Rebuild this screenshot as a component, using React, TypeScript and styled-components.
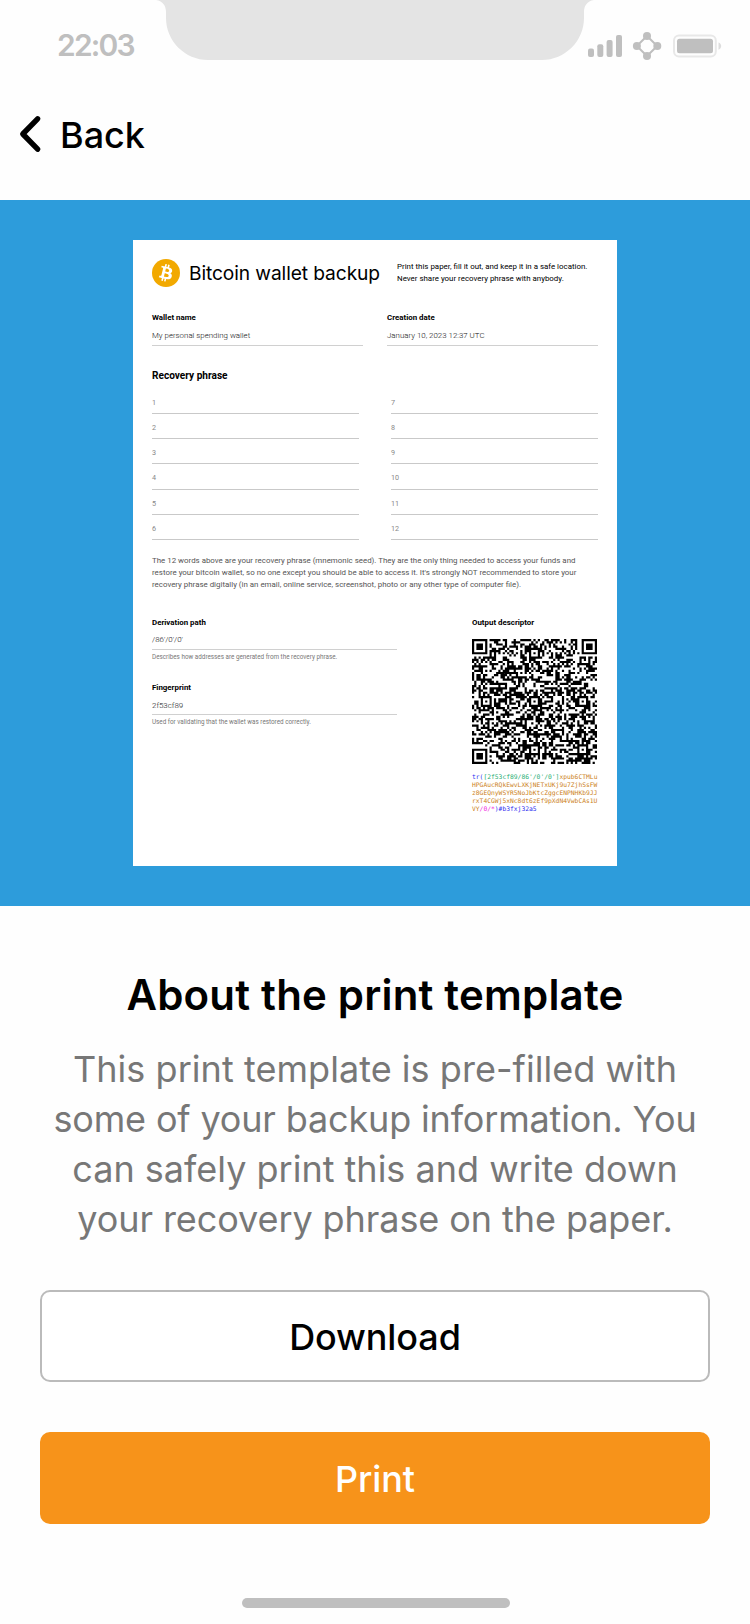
import React from 'react';
import styled, { createGlobalStyle } from 'styled-components';

const Global = createGlobalStyle`
  *, *::before, *::after { box-sizing: border-box; }
  body { margin: 0; background: #fefefe; }
  h1, h2, h3, p { margin: 0; }
`;

const Screen = styled.div`
  width: 750px;
  height: 1624px;
  display: flex;
  flex-direction: column;
  overflow: hidden;
  background: #fefefe;
  color: #000;
  font-family: Inter, "Liberation Sans", sans-serif;
`;

const StatusBar = styled.header`
  height: 88px;
  flex: none;
  display: flex;
  align-items: flex-start;
  padding-left: 57px;
`;

const Clock = styled.time`
  flex: none;
  width: 99px;
  padding-top: 26px;
  font-size: 30px;
  line-height: 38px;
  font-weight: 600;
  letter-spacing: -1.8px;
  color: #bfbfbf;
`;

const NotchShape = styled.svg`
  display: block;
  flex: none;
  margin-right: -6px;
`;

const StatusIcons = styled.svg`
  display: block;
  flex: none;
  margin-top: 28px;
`;

const NavBar = styled.nav`
  height: 112px;
  flex: none;
  display: flex;
  align-items: flex-start;
  padding: 24px 0 0 18px;
`;

const BackButton = styled.button`
  display: flex;
  align-items: flex-start;
  gap: 16px;
  height: 46px;
  padding: 0;
  border: 0;
  background: none;
  color: #000;
  font: 500 36px/46px Inter, sans-serif;
`;

const Chevron = styled.svg`
  display: block;
  margin-top: 2px;
`;

const Preview = styled.section`
  flex: none;
  height: 706px;
  padding-top: 40px;
  display: flex;
  justify-content: center;
  align-items: flex-start;
  background: #2d9cdb;
`;

const Paper = styled.article`
  width: 484px;
  height: 626px;
  padding: 19px 19px 0;
  background: #fff;
  font-family: Roboto, sans-serif;
  color: #000;
`;

const PaperHeader = styled.div`
  display: flex;
  height: 53px;
`;

const PaperTitle = styled.h1`
  margin-left: 9px;
  width: 208px;
  white-space: nowrap;
  font: 400 19.2px/28px Inter, sans-serif;
  letter-spacing: -0.1px;
`;

const PaperHint = styled.p`
  font-size: 7.92px;
  line-height: 12px;
  white-space: nowrap;
  padding-top: 2px;
`;

const Columns = styled.div<{ $gap: number }>`
  display: grid;
  grid-template-columns: 1fr 1fr;
  column-gap: ${(p) => p.$gap}px;
`;

const Label = styled.h3`
  font-size: 7.9px;
  line-height: 12px;
  font-weight: 700;
`;

const Value = styled.p`
  height: 22px;
  padding-top: 4.6px;
  font-size: 7.9px;
  line-height: 13px;
  font-weight: 300;
  color: #111;
  border-bottom: 1px solid #d0d0d0;
`;

const Note = styled.p`
  padding-top: 3px;
  font-size: 6.32px;
  line-height: 9px;
  color: #777;
`;

const SectionTitle = styled.h2`
  margin-top: 22.5px;
  font-size: 10.1px;
  line-height: 13px;
  font-weight: 700;
`;

const WordList = styled.ol`
  list-style: none;
  margin: 7.5px 0 0;
  padding: 0;
`;

const WordSlot = styled.li`
  height: 25.17px;
  padding-top: 9px;
  font-size: 7.2px;
  line-height: 10px;
  color: #888;
  border-bottom: 1px solid #c9c9c9;
`;

const Explanation = styled.p`
  margin-top: 15.3px;
  font-size: 7.91px;
  line-height: 12px;
  color: #555;
  white-space: nowrap;
`;

const Details = styled.div`
  display: flex;
  justify-content: space-between;
  margin-top: 25.5px;
`;

const DetailColumn = styled.div<{ $width: number }>`
  width: ${(p) => p.$width}px;
  display: flex;
  flex-direction: column;
`;

const Detail = styled.div`
  height: 65.3px;

  ${Value} {
    height: 21.4px;
  }
`;

const QrImage = styled.svg`
  display: block;
  margin-top: 10px;
`;

const Descriptor = styled.p`
  margin-top: 9.1px;
  font-family: "DejaVu Sans Mono", monospace;
  font-size: 6.32px;
  line-height: 8.1px;
  white-space: nowrap;
  color: #cc7f1a;
`;

const Part = styled.span<{ $color: string }>`
  color: ${(p) => p.$color};
`;

const About = styled.section`
  flex: none;
  height: 384px;
  padding-top: 63px;
  text-align: center;
`;

const AboutTitle = styled.h2`
  font-size: 42px;
  line-height: 52px;
  font-weight: 600;
  letter-spacing: 0.19px;
`;

const AboutText = styled.p`
  margin-top: 23px;
  font-size: 36px;
  line-height: 50px;
  color: #777;
`;

const Line = styled.span<{ $tracking: number }>`
  display: block;
  letter-spacing: ${(p) => p.$tracking}px;
`;

const Actions = styled.div`
  flex: none;
  display: flex;
  flex-direction: column;
  gap: 50px;
  padding: 0 40px;
`;

const Button = styled.button<{ $primary?: boolean }>`
  height: 92px;
  padding: 2px 0 0;
  border: ${(p) => (p.$primary ? '0' : '2px solid #bbb')};
  border-radius: 10px;
  background: ${(p) => (p.$primary ? '#f7931a' : '#fff')};
  color: ${(p) => (p.$primary ? '#fff' : '#000')};
  font: 500 36px/46px Inter, sans-serif;
  letter-spacing: -0.1px;
`;

const HomeIndicator = styled.div`
  flex: none;
  width: 268px;
  height: 10px;
  margin: 74px 0 0 242px;
  border-radius: 5px;
  background: #bfbfbf;
`;

const ORIGIN = "[2f53cf89/86'/0'/0']";
const KEY_LINES = [
  'xpub6CTMLu',
  'HPGAucRQkEwvLXKjNETxUKj9u7ZjhSsFW',
  'z8GEQnyWSYR5NoJbKtcZggcENPNHKb9JJ',
  'rxT4CGWj5xNc8dt6zEf9pXdN4VwbCAs1U',
  'VY',
];
const DERIVATION = '/0/*';
const CHECKSUM = ')#b3fxj32a5';
const DESCRIPTOR = `tr(${ORIGIN}${KEY_LINES.join('')}${DERIVATION}${CHECKSUM}`;

// QR version 10, error correction level Q, byte mode.
const QR_SIZE = 57;
const ECC_LENGTH = 24;
const BLOCK_LENGTHS = [19, 19, 19, 19, 19, 19, 20, 20];
const DATA_LENGTH = 154;

function gfMultiply(a: number, b: number): number {
  let z = 0;
  for (let i = 7; i >= 0; i--) {
    z = (z << 1) ^ ((z >>> 7) * 0x11d);
    z ^= ((b >>> i) & 1) * a;
  }
  return z;
}

function eccDivisor(): number[] {
  const result: number[] = Array(ECC_LENGTH).fill(0);
  result[ECC_LENGTH - 1] = 1;
  let root = 1;
  for (let i = 0; i < ECC_LENGTH; i++) {
    for (let j = 0; j < ECC_LENGTH; j++) {
      result[j] = gfMultiply(result[j], root) ^ (result[j + 1] ?? 0);
    }
    root = gfMultiply(root, 2);
  }
  return result;
}

function eccOf(data: number[], divisor: number[]): number[] {
  const result: number[] = Array(ECC_LENGTH).fill(0);
  data.forEach((byte) => {
    const factor = byte ^ (result.shift() as number);
    result.push(0);
    divisor.forEach((d, i) => {
      result[i] ^= gfMultiply(d, factor);
    });
  });
  return result;
}

function encodeCodewords(text: string): number[] {
  const bits: number[] = [];
  const push = (value: number, length: number) => {
    for (let i = length - 1; i >= 0; i--) bits.push((value >>> i) & 1);
  };
  push(4, 4);
  push(text.length, 16);
  for (let i = 0; i < text.length; i++) push(text.charCodeAt(i), 8);
  push(0, Math.min(4, DATA_LENGTH * 8 - bits.length));
  while (bits.length % 8) bits.push(0);
  const bytes: number[] = [];
  for (let i = 0; i < bits.length; i += 8) {
    bytes.push(parseInt(bits.slice(i, i + 8).join(''), 2));
  }
  for (let pad = 0xec; bytes.length < DATA_LENGTH; pad ^= 0xec ^ 0x11) bytes.push(pad);

  const divisor = eccDivisor();
  let offset = 0;
  const blocks = BLOCK_LENGTHS.map((length) => {
    const data = bytes.slice(offset, offset + length);
    offset += length;
    return { data, ecc: eccOf(data, divisor) };
  });
  const out: number[] = [];
  for (let i = 0; i < 20; i++) {
    blocks.forEach((b) => {
      if (i < b.data.length) out.push(b.data[i]);
    });
  }
  for (let i = 0; i < ECC_LENGTH; i++) blocks.forEach((b) => out.push(b.ecc[i]));
  return out;
}

const MASKS: ((x: number, y: number) => boolean)[] = [
  (x, y) => (x + y) % 2 === 0,
  (_, y) => y % 2 === 0,
  (x) => x % 3 === 0,
  (x, y) => (x + y) % 3 === 0,
  (x, y) => (Math.floor(x / 3) + Math.floor(y / 2)) % 2 === 0,
  (x, y) => ((x * y) % 2) + ((x * y) % 3) === 0,
  (x, y) => (((x * y) % 2) + ((x * y) % 3)) % 2 === 0,
  (x, y) => (((x + y) % 2) + ((x * y) % 3)) % 2 === 0,
];

function penalty(grid: boolean[][]): number {
  let score = 0;
  let dark = 0;
  const lines = [
    ...grid.map((row) => row.map(Number).join('')),
    ...grid.map((_, x) => grid.map((row) => Number(row[x])).join('')),
  ];
  lines.forEach((line) => {
    (line.match(/0{5,}|1{5,}/g) ?? []).forEach((run) => {
      score += run.length - 2;
    });
    score += 40 * (line.match(/(?=00001011101|10111010000)/g) ?? []).length;
  });
  for (let y = 0; y < QR_SIZE; y++) {
    for (let x = 0; x < QR_SIZE; x++) {
      const c = grid[y][x];
      if (c) dark++;
      if (y && x && c === grid[y - 1][x] && c === grid[y][x - 1] && c === grid[y - 1][x - 1]) {
        score += 3;
      }
    }
  }
  return score + 10 * Math.floor(Math.abs((dark * 20) / (QR_SIZE * QR_SIZE) - 10));
}

function buildGrid(codewords: number[], mask: number): boolean[][] {
  const grid = Array.from({ length: QR_SIZE }, () => Array<boolean>(QR_SIZE).fill(false));
  const fixed = Array.from({ length: QR_SIZE }, () => Array<boolean>(QR_SIZE).fill(false));
  const set = (x: number, y: number, on: boolean) => {
    if (x < 0 || y < 0 || x >= QR_SIZE || y >= QR_SIZE) return;
    grid[y][x] = on;
    fixed[y][x] = true;
  };
  const rings = (cx: number, cy: number, reach: number, light: number[]) => {
    for (let y = -reach; y <= reach; y++) {
      for (let x = -reach; x <= reach; x++) {
        set(cx + x, cy + y, !light.includes(Math.max(Math.abs(x), Math.abs(y))));
      }
    }
  };
  for (let i = 0; i < QR_SIZE; i++) {
    set(6, i, i % 2 === 0);
    set(i, 6, i % 2 === 0);
  }
  const last = QR_SIZE - 4;
  [[3, 3], [3, last], [last, 3]].forEach(([x, y]) => rings(x, y, 4, [2, 4]));
  [[6, 28], [28, 6], [28, 28], [28, 50], [50, 28], [50, 50]].forEach(([x, y]) =>
    rings(x, y, 2, [1]),
  );

  const format = (3 << 3) | mask;
  let rem = format;
  for (let i = 0; i < 10; i++) rem = (rem << 1) ^ ((rem >>> 9) * 0x537);
  const formatBits = ((format << 10) | rem) ^ 0x5412;
  const bit = (i: number) => ((formatBits >>> i) & 1) === 1;
  for (let i = 0; i < 6; i++) set(8, i, bit(i));
  set(8, 7, bit(6));
  set(8, 8, bit(7));
  set(7, 8, bit(8));
  for (let i = 9; i < 15; i++) set(14 - i, 8, bit(i));
  for (let i = 0; i < 8; i++) set(QR_SIZE - 1 - i, 8, bit(i));
  for (let i = 8; i < 15; i++) set(8, QR_SIZE - 15 + i, bit(i));
  set(8, QR_SIZE - 8, true);

  for (let i = 0; i < 18; i++) {
    const on = ((0x0a4d3 >>> i) & 1) === 1;
    const a = QR_SIZE - 11 + (i % 3);
    const b = Math.floor(i / 3);
    set(a, b, on);
    set(b, a, on);
  }

  let i = 0;
  for (let right = QR_SIZE - 1; right >= 1; right -= 2) {
    if (right === 6) right = 5;
    for (let step = 0; step < QR_SIZE; step++) {
      for (let j = 0; j < 2; j++) {
        const x = right - j;
        const y = ((right + 1) & 2) === 0 ? QR_SIZE - 1 - step : step;
        if (fixed[y][x]) continue;
        const on = i < codewords.length * 8 && ((codewords[i >>> 3] >>> (7 - (i & 7))) & 1) === 1;
        grid[y][x] = on !== MASKS[mask](x, y);
        i++;
      }
    }
  }
  return grid;
}

function buildQrPath(text: string): string {
  const codewords = encodeCodewords(text);
  const candidates = MASKS.map((_, mask) => buildGrid(codewords, mask));
  const best = candidates.reduce((a, b) => (penalty(b) < penalty(a) ? b : a));
  return best
    .map((row, y) => row.map((on, x) => (on ? `M${x} ${y}h1v1h-1z` : '')).join(''))
    .join('');
}

const QR_PATH = buildQrPath(DESCRIPTOR);

const Notch = () => (
  <NotchShape width="438" height="60" viewBox="156 0 438 60">
    <path
      d="M156 0C163 1 166 6 166 12V18C166 41 185 60 208 60H542C565 60 584 41 584 18V12C584 6 587 1 594 0Z"
      fill="#e4e4e4"
    />
  </NotchShape>
);

const BitcoinLogo = () => (
  <svg width="28" height="28" viewBox="0 0 64 64">
    <circle cx="32" cy="32" r="32" fill="#f2a900" />
    <path
      fill="#fff"
      d="M46.1 27.44c.64-4.26-2.6-6.55-7.04-8.07l1.44-5.77-3.5-.88-1.4 5.62c-.92-.23-1.87-.45-2.81-.66l1.41-5.65-3.51-.88-1.44 5.77c-.77-.17-1.52-.35-2.24-.53v-.02l-4.85-1.21-.93 3.75s2.6.6 2.55.63c1.42.36 1.68 1.3 1.64 2.04l-1.65 6.57c.1.03.23.06.37.12l-.38-.09-2.3 9.2c-.17.43-.62 1.08-1.61.83.04.06-2.55-.63-2.55-.63l-1.75 4.02 4.57 1.14c.85.21 1.68.44 2.5.65l-1.45 5.84 3.51.87 1.44-5.77c.96.26 1.89.5 2.8.73l-1.44 5.74 3.51.88 1.46-5.82c5.99 1.13 10.5.67 12.39-4.75 1.53-4.36-.07-6.88-3.22-8.52 2.29-.53 4.02-2.04 4.48-5.15zM38.08 38.69c-1.09 4.36-8.43 2-10.81 1.41l1.93-7.73c2.38.6 10.01 1.77 8.88 6.32zm1.08-11.31c-.99 3.97-7.1 1.95-9.08 1.46l1.75-7.01c1.98.49 8.36 1.41 7.33 5.55z"
    />
  </svg>
);

const words = (from: number) => (
  <WordList>
    {Array.from({ length: 6 }, (_, i) => (
      <WordSlot key={i}>{from + i}</WordSlot>
    ))}
  </WordList>
);

export default function App() {
  return (
    <Screen>
      <Global />
      <StatusBar>
        <Clock>22:03</Clock>
        <Notch />
        <StatusIcons width="134" height="36" viewBox="588 28 134 36" fill="#bfbfbf">
          <rect x="588" y="48.5" width="6" height="8.5" rx="2" />
          <rect x="597.3" y="44.3" width="6" height="12.7" rx="2" />
          <rect x="606.6" y="40" width="6" height="17" rx="2" />
          <rect x="616" y="35" width="6" height="22" rx="2" />
          <path d="M647 36l10.2 10L647 56l-10.2-10z" fill="none" stroke="#bfbfbf" strokeWidth="2" />
          <circle cx="647" cy="36" r="4" />
          <circle cx="657.3" cy="46" r="4" />
          <circle cx="647" cy="56" r="4" />
          <circle cx="636.9" cy="46" r="4" />
          <rect x="674" y="35.5" width="41.8" height="21" rx="5" fill="none" stroke="#e8e8e8" strokeWidth="2" />
          <rect x="677" y="38.7" width="36" height="14.5" rx="2.5" />
          <path d="M718.5 42.5c3.6 1.2 3.6 6 0 7.2z" fill="#ddd" />
        </StatusIcons>
      </StatusBar>
      <NavBar>
        <BackButton>
          <Chevron width="26" height="40" viewBox="0 0 26 40" fill="none">
            <path d="M19.6 4.8L4.8 20L19.6 35.2" stroke="#000" strokeWidth="5.4" strokeLinecap="round" strokeLinejoin="round" />
          </Chevron>
          Back
        </BackButton>
      </NavBar>
      <Preview>
        <Paper>
          <PaperHeader>
            <BitcoinLogo />
            <PaperTitle>Bitcoin wallet backup</PaperTitle>
            <PaperHint>
              Print this paper, fill it out, and keep it in a safe location.
              <br />
              Never share your recovery phrase with anybody.
            </PaperHint>
          </PaperHeader>
          <Columns $gap={24}>
            <div>
              <Label>Wallet name</Label>
              <Value>My personal spending wallet</Value>
            </div>
            <div>
              <Label>Creation date</Label>
              <Value>January 10, 2023 12:37 UTC</Value>
            </div>
          </Columns>
          <SectionTitle>Recovery phrase</SectionTitle>
          <Columns $gap={32}>
            {words(1)}
            {words(7)}
          </Columns>
          <Explanation>
            The 12 words above are your recovery phrase (mnemonic seed). They are the only thing needed to access your funds and
            <br />
            restore your bitcoin wallet, so no one except you should be able to access it. It's strongly NOT recommended to store your
            <br />
            recovery phrase digitally (in an email, online service, screenshot, photo or any other type of computer file).
          </Explanation>
          <Details>
            <DetailColumn $width={245}>
              <Detail>
                <Label>Derivation path</Label>
                <Value>/86'/0'/0'</Value>
                <Note>Describes how addresses are generated from the recovery phrase.</Note>
              </Detail>
              <Detail>
                <Label>Fingerprint</Label>
                <Value>2f53cf89</Value>
                <Note>Used for validating that the wallet was restored correctly.</Note>
              </Detail>
            </DetailColumn>
            <DetailColumn $width={126}>
              <Label>Output descriptor</Label>
              <QrImage width="125" height="125" viewBox={`0 0 ${QR_SIZE} ${QR_SIZE}`}>
                <path d={QR_PATH} fill="#000" />
              </QrImage>
              <Descriptor>
                <Part $color="#2b2bf0">tr(</Part>
                <Part $color="#27ae73">{ORIGIN}</Part>
                {KEY_LINES.map((line, i) => (
                  <React.Fragment key={line}>
                    {i > 0 && <br />}
                    {line}
                  </React.Fragment>
                ))}
                <Part $color="#f02be0">{DERIVATION}</Part>
                <Part $color="#2b2bf0">{CHECKSUM}</Part>
              </Descriptor>
            </DetailColumn>
          </Details>
        </Paper>
      </Preview>
      <About>
        <AboutTitle>About the print template</AboutTitle>
        <AboutText>
          <Line $tracking={0.05}>This print template is pre-filled with</Line>
          <Line $tracking={-0.16}>some of your backup information. You</Line>
          <Line $tracking={0}>can safely print this and write down</Line>
          <Line $tracking={-0.08}>your recovery phrase on the paper.</Line>
        </AboutText>
      </About>
      <Actions>
        <Button>Download</Button>
        <Button $primary>Print</Button>
      </Actions>
      <HomeIndicator />
    </Screen>
  );
}
